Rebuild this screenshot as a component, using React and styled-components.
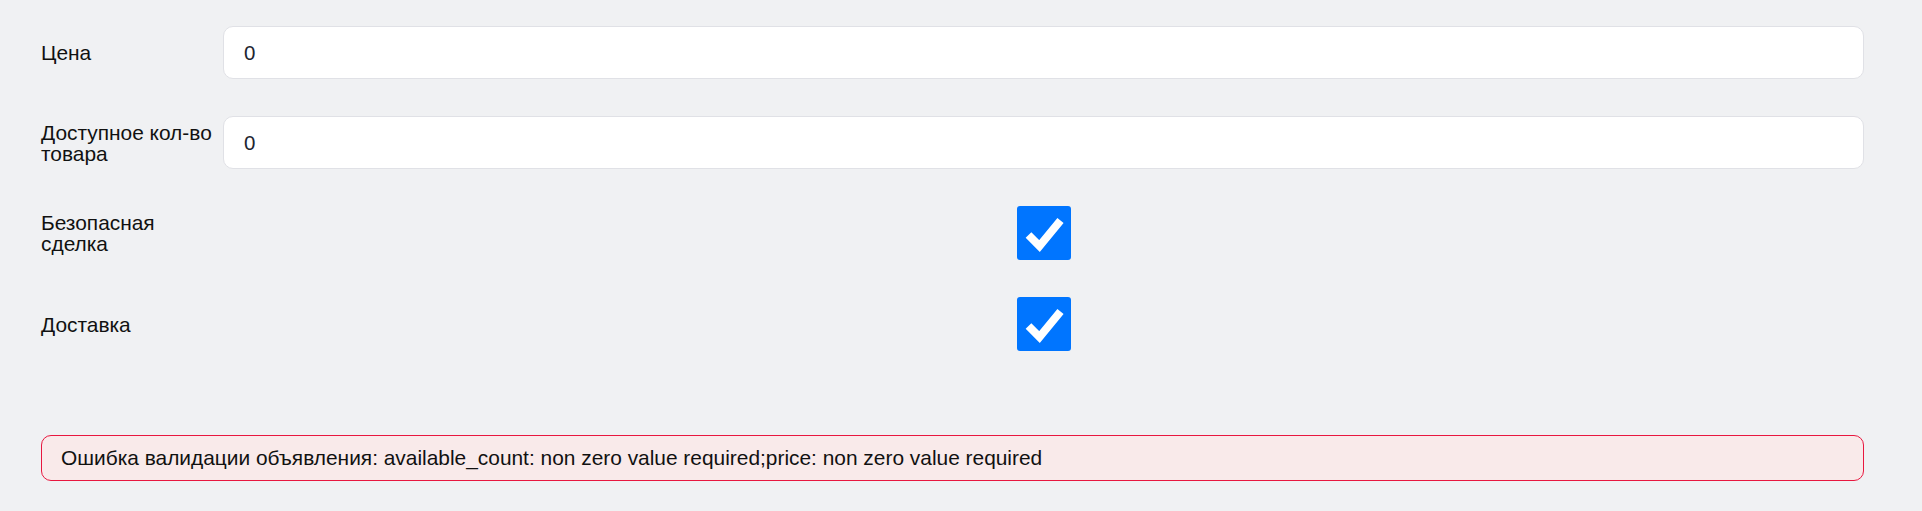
import styled, { createGlobalStyle } from "styled-components";

const GlobalStyle = createGlobalStyle`
  html, body {
    margin: 0;
    padding: 0;
    background: #f0f1f3;
    font-family: "Liberation Sans", Arial, sans-serif;
  }
`;

const Page = styled.div`
  padding: 26px 58px 30px 41px;
`;

const Form = styled.div`
  display: flex;
  flex-direction: column;
  gap: 37px;
`;

const Row = styled.div`
  display: grid;
  grid-template-columns: 182px 1fr;
  align-items: center;
  min-height: 53px;
`;

const Label = styled.div`
  font-size: 20.9px;
  line-height: 21px;
  color: #111;
  padding-right: 6px;
`;

const Input = styled.input`
  box-sizing: border-box;
  height: 53px;
  width: 100%;
  padding: 0 20px;
  border: 1px solid #e0e1e6;
  border-radius: 10px;
  background: #fff;
  font-family: "Liberation Sans", Arial, sans-serif;
  font-size: 20.5px;
  color: #1c2530;
  outline: none;
`;

const CheckCell = styled.div`
  display: flex;
  justify-content: center;
`;

const Box = styled.span`
  display: block;
  width: 54px;
  height: 54px;
  border-radius: 3px;
  background: ${(p) => (p.checked ? "#0075ff" : "#fff")};
  border: ${(p) => (p.checked ? "none" : "2px solid #767676")};
  box-sizing: border-box;
`;

const ErrorBox = styled.div`
  margin-top: 84px;
  box-sizing: border-box;
  height: 46px;
  display: flex;
  align-items: center;
  padding: 0 19px;
  border: 1.5px solid #e8173f;
  border-radius: 10px;
  background: #f9eaea;
  font-size: 20.9px;
  color: #111;
`;

const Check = ({ checked }) => (
  <Box checked={checked}>
    {checked && (
      <svg width="54" height="54" viewBox="0 0 54 54">
        <polyline
          points="11.5,29 22.5,40 43.5,14.5"
          fill="none"
          stroke="#fff"
          strokeWidth="8"
          strokeLinejoin="miter"
        />
      </svg>
    )}
  </Box>
);

const fields = [
  { label: "Цена", type: "input", value: "0" },
  { label: "Доступное кол-во товара", type: "input", value: "0" },
  { label: "Безопасная сделка", type: "check", value: true },
  { label: "Доставка", type: "check", value: true },
];

export default function App() {
  return (
    <Page>
      <GlobalStyle />
      <Form>
        {fields.map((f) => (
          <Row key={f.label}>
            <Label>{f.label}</Label>
            {f.type === "input" ? (
              <Input defaultValue={f.value} />
            ) : (
              <CheckCell>
                <Check checked={f.value} />
              </CheckCell>
            )}
          </Row>
        ))}
      </Form>
      <ErrorBox>
        Ошибка валидации объявления: available_count: non zero value
        required;price: non zero value required
      </ErrorBox>
    </Page>
  );
}
